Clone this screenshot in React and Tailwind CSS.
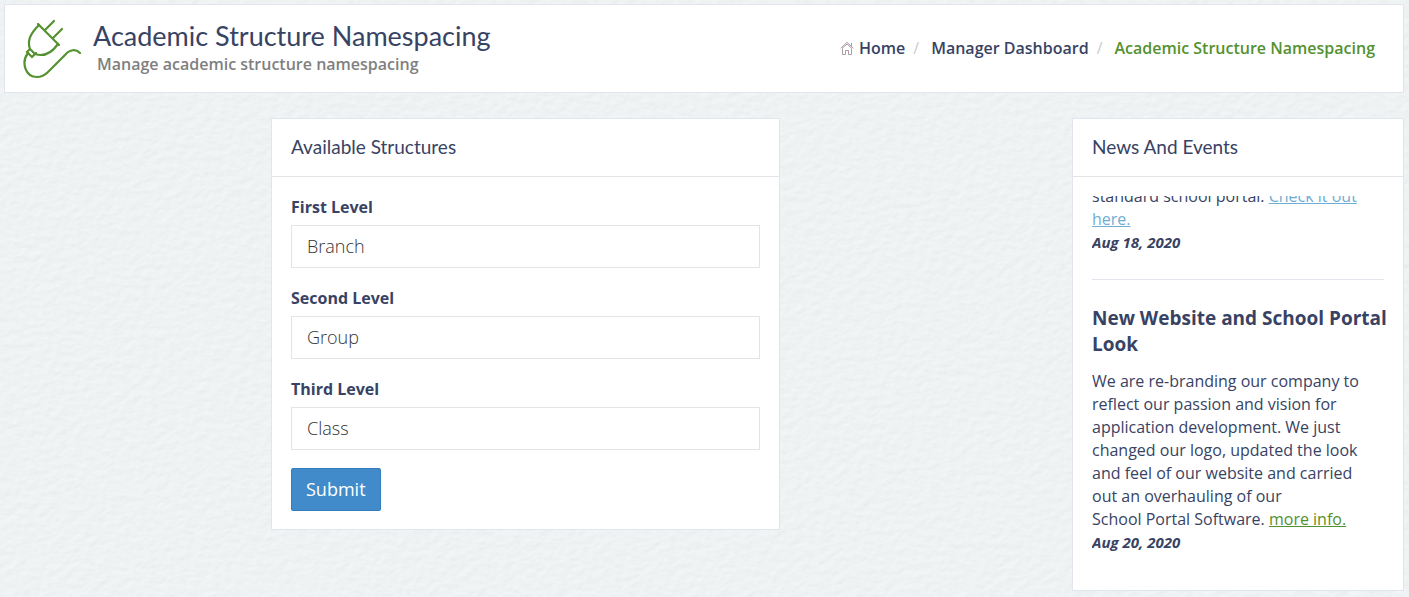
import React from "react";

const levels = [
  { id: "first", label: "First Level", value: "Branch" },
  { id: "second", label: "Second Level", value: "Group" },
  { id: "third", label: "Third Level", value: "Class" },
];

function PaperTexture() {
  return (
    <svg className="absolute inset-0 -z-10 h-full w-full" aria-hidden="true">
      <filter id="paper" x="0" y="0" width="100%" height="100%" colorInterpolationFilters="sRGB">
        <feTurbulence type="fractalNoise" baseFrequency="0.11 0.15" numOctaves="2" seed="4" />
        <feDiffuseLighting surfaceScale="0.5" diffuseConstant="1.3" lightingColor="#eef1f2">
          <feDistantLight azimuth="60" elevation="50" />
        </feDiffuseLighting>
      </filter>
      <rect width="100%" height="100%" fill="#f0f3f4" />
      <rect width="100%" height="100%" filter="url(#paper)" opacity="0.16" />
    </svg>
  );
}

function PlugIcon() {
  return (
    <svg
      className="h-[62px] w-[62px] shrink-0"
      viewBox="0 0 62 62"
      fill="none"
      stroke="#549130"
      strokeWidth="2.2"
      strokeLinecap="round"
      aria-hidden="true"
    >
      <path d="M16 6 37 27M23 12 32 3M31 20 40 11" />
      <path d="M17 7C8 16 5 23 8 31L13 36C22 39 29 36 36 26" />
      <path d="M8 31 5 34 10 39 14 35" />
      <path d="M6 35C-1 44 3 59 15 59C20 59 23 57 26 54L43 37C48 31 54 31 58 35" />
    </svg>
  );
}

function HomeIcon() {
  return (
    <svg className="h-[14px] w-[14px]" viewBox="0 0 14 14" fill="none" stroke="#aa9ba6" aria-hidden="true">
      <path d="M.7 7.300 7 1.300 13.300 7.300M2 7.500 7 3 12 7.500M2.500 7.500V13.500H5.500V9.500H8.500V13.500H11.500V7.500M11.500 5V2" />
    </svg>
  );
}

function Card({ title, className, children }) {
  return (
    <section className={"border border-[#e2e5ee] bg-white " + className}>
      <h2 className="border-b border-[#e3e4e8] px-[19px] pt-[14px] pb-4 font-['Lato','Open_Sans',sans-serif] text-[19px] leading-[27px] text-[#384364]">
        {title}
      </h2>
      {children}
    </section>
  );
}

export default function App() {
  return (
    <div className="relative isolate flex min-h-screen flex-col gap-[25px] py-1 pr-[5px] pl-1 font-['Open_Sans','Noto_Sans',sans-serif] text-base text-[#384364]">
      <PaperTexture />
      <header className="flex items-center justify-between border border-[#e2e5ee] bg-white pt-3 pr-7 pb-3 pl-[17px]">
        <div className="flex items-center gap-[9px]">
          <PlugIcon />
          <div className="pb-1">
            <h1 className="mt-[2px] font-['Lato','Open_Sans',sans-serif] text-[27px] leading-[33px] text-[#384364]">
              Academic Structure Namespacing
            </h1>
            <p className="pl-1 leading-6 font-semibold text-[#7f7f7f]">Manage academic structure namespacing</p>
          </div>
        </div>
        <nav aria-label="Breadcrumb" className="pb-[2px]">
          <ol className="flex items-center font-semibold leading-6">
            <li>
              <a href="#home" className="flex items-center gap-[5px]">
                <HomeIcon />
                Home
              </a>
            </li>
            <li className="px-2 font-normal text-[#cccccc]" aria-hidden="true">/</li>
            <li className="pl-1">
              <a href="#dashboard">Manager Dashboard</a>
            </li>
            <li className="px-2 font-normal text-[#cccccc]" aria-hidden="true">/</li>
            <li className="pl-1 text-[#549130]" aria-current="page">Academic Structure Namespacing</li>
          </ol>
        </nav>
      </header>

      <div className="flex items-start gap-[25px]">
        <main className="min-w-0 flex-1">
          <Card title="Available Structures" className="mx-auto w-full max-w-[509px]">
            <form className="flex flex-col gap-[18px] px-[19px] py-[18px]" onSubmit={(e) => e.preventDefault()}>
              {levels.map((level) => (
                <div key={level.id} className="flex flex-col gap-[6px]">
                  <label htmlFor={level.id} className="leading-6 font-bold">{level.label}</label>
                  <input
                    id={level.id}
                    type="text"
                    defaultValue={level.value}
                    className="h-[43px] w-full border border-[#e3e4e8] bg-white px-[15px] pb-[2px] text-[18px] font-light text-[#333333] outline-none"
                  />
                </div>
              ))}
              <button
                type="submit"
                className="h-[43px] self-start rounded-[2px] border border-[#357ebd] bg-[#428bca] px-[14px] text-[18px] text-white"
              >
                Submit
              </button>
            </form>
          </Card>
        </main>

        <aside className="w-[332px] shrink-0">
          <Card title="News And Events" className="">
            <div className="py-[19px] pr-[11px] pl-[19px]">
              <div className="flex h-[375px] flex-col justify-end overflow-hidden pb-[17px] leading-[23px]">
                <article className="mr-2 border-b border-[#e2e5ee] pb-[25px]">
                  <p>
                    standard school portal.{" "}
                    <a href="#portal" className="text-[#6fadd3] underline">Check it out here.</a>
                  </p>
                  <p className="text-[15px] font-bold italic">Aug 18, 2020</p>
                </article>
                <article className="pt-[25px]">
                  <h3 className="mb-[13px] text-[19px] leading-[26px] font-bold">New Website and School Portal Look</h3>
                  <p className="mr-2">
                    We are re-branding our company to reflect our passion and vision for application development. We
                    just changed our logo, updated the look and feel of our website and carried
                    <br />
                    out an overhauling of our School&nbsp;Portal&nbsp;Software.{" "}
                    <a href="#more" className="text-[#549130] underline">more info.</a>
                  </p>
                  <p className="text-[15px] font-bold italic">Aug 20, 2020</p>
                </article>
              </div>
            </div>
          </Card>
        </aside>
      </div>
    </div>
  );
}
